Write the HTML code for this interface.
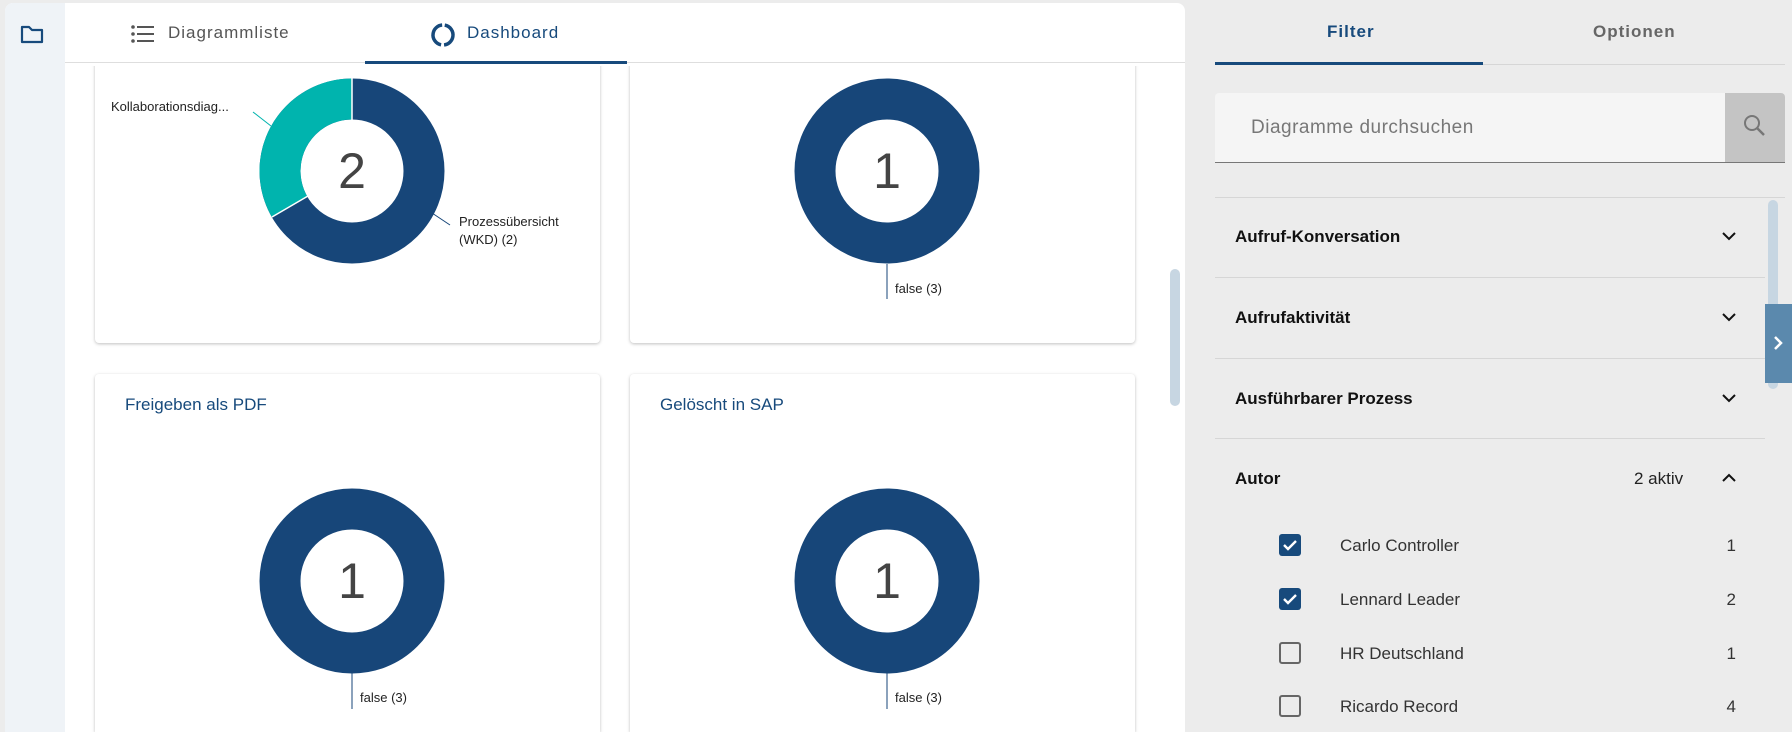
<!DOCTYPE html>
<html style="overflow:hidden;width:1792px;height:732px"><head><meta charset="utf-8"><style>
*{margin:0;padding:0;box-sizing:border-box}
body{width:1792px;height:732px;overflow:hidden;background:#ececec;font-family:"Liberation Sans",Arial,sans-serif;position:relative}
.abs{position:absolute}
.main{left:5px;top:3px;width:1180px;height:729px;background:#fff;border-radius:8px 8px 0 0;overflow:hidden}
.side{left:0;top:0;width:60px;height:729px;background:#eff3f7}
.card{background:#fff;border-radius:4px;box-shadow:0 1px 3px rgba(0,0,0,.25)}
.lbl{font-size:13px;color:#222}
.num{font-size:50px;color:#444;text-align:center;width:100px}
.row{left:1215px;width:550px;height:1px;background:#d6d6d6}
.it{font-size:17px;font-weight:bold;color:#111;left:1235px}
.cb{left:1279px;width:22px;height:22px;border-radius:3px}
.nm{left:1340px;font-size:17px;color:#333}
.ct{left:1720px;width:16px;text-align:right;font-size:17px;color:#333}
</style></head><body>
<div class="abs main">
  <div class="abs side"></div>
  <svg class="abs" style="left:14px;top:20px" width="26" height="22" viewBox="0 0 26 22"><path d="M3 4h7l3 3h10v12H3z" fill="none" stroke="#174a7c" stroke-width="2.2" stroke-linejoin="round"/></svg>
  <div class="abs" style="left:60px;top:59px;width:1120px;height:1px;background:#dedede"></div>
  <svg class="abs" style="left:126px;top:21px" width="24" height="20"><g fill="#555"><circle cx="2" cy="3" r="1.8"/><circle cx="2" cy="10" r="1.8"/><circle cx="2" cy="17" r="1.8"/><rect x="6" y="2" width="17" height="2"/><rect x="6" y="9" width="17" height="2"/><rect x="6" y="16" width="17" height="2"/></g></svg>
  <div class="abs" style="left:163px;top:20px;font-size:17px;letter-spacing:1px;color:#555">Diagrammliste</div>
  <svg class="abs" style="left:425px;top:19px" width="26" height="26" viewBox="0 0 26 26"><circle cx="13" cy="13" r="10" fill="none" stroke="#174a7c" stroke-width="3.5" stroke-dasharray="28.4 3" transform="rotate(-80 13 13)"/></svg>
  <div class="abs" style="left:462px;top:20px;font-size:17px;letter-spacing:1px;color:#174a7c">Dashboard</div>
  <div class="abs" style="left:360px;top:58px;width:262px;height:3px;background:#174a7c"></div>
  <div class="abs" style="left:1165px;top:266px;width:10px;height:137px;border-radius:5px;background:#c7d6e2"></div>
</div>
<div class="abs card" style="left:95px;top:20px;width:505px;height:323px;border-radius:0 0 4px 4px;clip-path:inset(46px -5px -5px -5px)"></div>
<div class="abs card" style="left:630px;top:20px;width:505px;height:323px;border-radius:0 0 4px 4px;clip-path:inset(46px -5px -5px -5px)"></div>
<div class="abs card" style="left:95px;top:374px;width:505px;height:358px;border-radius:4px 4px 0 0"></div>
<div class="abs card" style="left:630px;top:374px;width:505px;height:358px;border-radius:4px 4px 0 0"></div>
<div class="abs" style="left:125px;top:395px;font-size:17px;color:#174a7c">Freigeben als PDF</div>
<div class="abs" style="left:660px;top:395px;font-size:17px;color:#174a7c">Gelöscht in SAP</div>
<svg class="abs" style="left:0;top:0" width="1190" height="732">
  <circle cx="352" cy="171" r="72" fill="none" stroke="#174679" stroke-width="41"/>
  <circle cx="352" cy="171" r="72" fill="none" stroke="#00b4ae" stroke-width="41" stroke-dasharray="150.8 400" transform="rotate(150 352 171)"/>
  <line x1="352" y1="78" x2="352" y2="120" stroke="#fff" stroke-width="1.5"/>
  <line x1="272" y1="217" x2="308" y2="196" stroke="#fff" stroke-width="1.5"/>
  <line x1="253" y1="112" x2="271" y2="126" stroke="#00b4ae" stroke-width="1"/>
  <line x1="432" y1="213" x2="450" y2="225" stroke="#174679" stroke-width="1"/>
  <circle cx="887" cy="171" r="72" fill="none" stroke="#174679" stroke-width="41"/>
  <line x1="887" y1="264" x2="887" y2="299" stroke="#174679" stroke-width="1"/>
  <circle cx="352" cy="581" r="72" fill="none" stroke="#174679" stroke-width="41"/>
  <line x1="352" y1="673" x2="352" y2="709" stroke="#174679" stroke-width="1"/>
  <circle cx="887" cy="581" r="72" fill="none" stroke="#174679" stroke-width="41"/>
  <line x1="887" y1="673" x2="887" y2="709" stroke="#174679" stroke-width="1"/>
</svg>
<div class="abs num" style="left:302px;top:142px">2</div>
<div class="abs num" style="left:837px;top:142px">1</div>
<div class="abs num" style="left:302px;top:552px">1</div>
<div class="abs num" style="left:837px;top:552px">1</div>
<div class="abs lbl" style="left:111px;top:99px">Kollaborationsdiag...</div>
<div class="abs lbl" style="left:459px;top:213px;line-height:18px">Prozessübersicht<br>(WKD) (2)</div>
<div class="abs lbl" style="left:895px;top:281px">false (3)</div>
<div class="abs lbl" style="left:360px;top:690px">false (3)</div>
<div class="abs lbl" style="left:895px;top:690px">false (3)</div>

<div class="abs" style="left:1327px;top:22px;font-size:17px;font-weight:bold;letter-spacing:1px;color:#174a7c">Filter</div>
<div class="abs" style="left:1593px;top:22px;font-size:17px;font-weight:bold;letter-spacing:1px;color:#666">Optionen</div>
<div class="abs" style="left:1215px;top:64px;width:570px;height:1px;background:#d6d6d6"></div>
<div class="abs" style="left:1215px;top:62px;width:268px;height:3px;background:#174a7c"></div>
<div class="abs" style="left:1215px;top:93px;width:570px;height:70px;background:#f5f5f5;border-radius:4px 4px 0 0;border-bottom:1px solid #777;overflow:hidden">
  <div class="abs" style="right:0;top:0;width:60px;height:70px;background:#c4c4c4"></div>
  <svg class="abs" style="right:17px;top:20px" width="26" height="26"><circle cx="10" cy="10" r="7" fill="none" stroke="#777" stroke-width="2"/><line x1="15" y1="15" x2="22" y2="22" stroke="#777" stroke-width="2.5"/></svg>
  <div class="abs" style="left:36px;top:24px;font-size:19px;letter-spacing:.5px;color:#777">Diagramme durchsuchen</div>
</div>
<div class="abs row" style="top:197px;width:570px"></div>
<div class="abs row" style="top:277px"></div>
<div class="abs row" style="top:358px"></div>
<div class="abs row" style="top:438px"></div>
<div class="abs it" style="top:227px">Aufruf-Konversation</div>
<div class="abs it" style="top:308px">Aufrufaktivität</div>
<div class="abs it" style="top:389px">Ausführbarer Prozess</div>
<div class="abs it" style="top:469px">Autor</div>
<div class="abs" style="left:1634px;top:469px;font-size:17px;color:#222">2 aktiv</div>
<svg class="abs" style="left:1720px;top:228px" width="18" height="270"><g fill="none" stroke="#111" stroke-width="2"><path d="M3 5l6 6 6-6"/><path d="M3 86l6 6 6-6"/><path d="M3 167l6 6 6-6"/><path d="M3 253l6-6 6 6"/></g></svg>
<div class="abs cb" style="top:534px;background:#174a7c"></div>
<div class="abs cb" style="top:588px;background:#174a7c"></div>
<svg class="abs" style="left:1279px;top:534px" width="22" height="80"><g fill="none" stroke="#fff" stroke-width="2.4"><path d="M5 11l4 4 8-8"/><path d="M5 65l4 4 8-8"/></g></svg>
<div class="abs cb" style="top:642px;border:2px solid #666"></div>
<div class="abs cb" style="top:695px;border:2px solid #666"></div>
<div class="abs nm" style="top:536px">Carlo Controller</div>
<div class="abs nm" style="top:590px">Lennard Leader</div>
<div class="abs nm" style="top:644px">HR Deutschland</div>
<div class="abs nm" style="top:697px">Ricardo Record</div>
<div class="abs ct" style="top:536px">1</div>
<div class="abs ct" style="top:590px">2</div>
<div class="abs ct" style="top:644px">1</div>
<div class="abs ct" style="top:697px">4</div>
<div class="abs" style="left:1768px;top:200px;width:10px;height:189px;border-radius:5px;background:#c7d6e2"></div>
<div class="abs" style="left:1765px;top:304px;width:27px;height:79px;background:#5b89ad"></div>
<svg class="abs" style="left:1772px;top:335px" width="12" height="16"><path d="M3 2l6 6-6 6" fill="none" stroke="#fff" stroke-width="2.5"/></svg>
</body></html>
